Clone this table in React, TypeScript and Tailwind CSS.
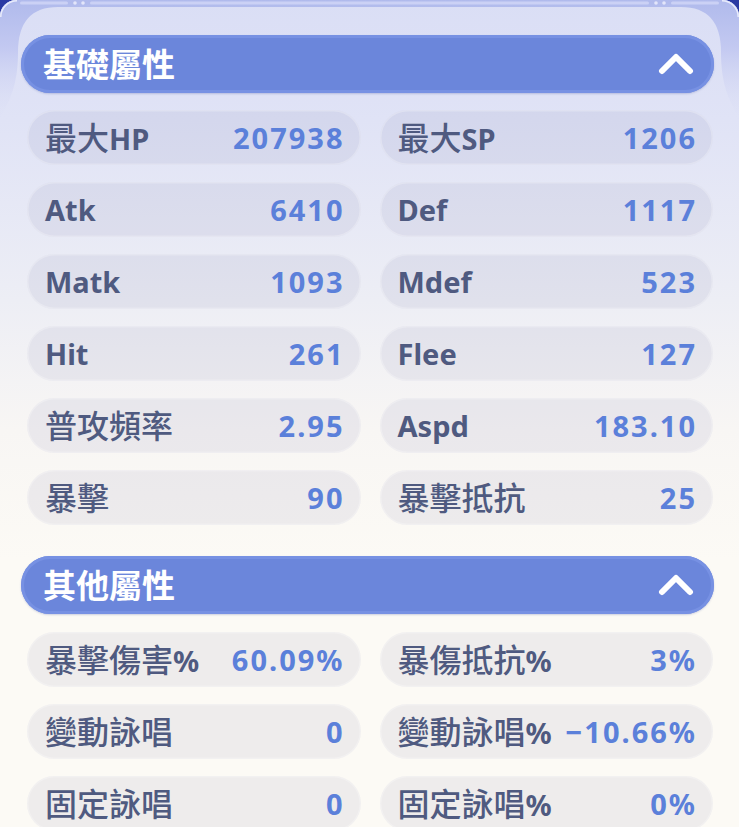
import React from "react";

type Stat = { label: string; value: string };

const basic: Stat[] = [
  { label: "最大HP", value: "207938" },
  { label: "最大SP", value: "1206" },
  { label: "Atk", value: "6410" },
  { label: "Def", value: "1117" },
  { label: "Matk", value: "1093" },
  { label: "Mdef", value: "523" },
  { label: "Hit", value: "261" },
  { label: "Flee", value: "127" },
  { label: "普攻頻率", value: "2.95" },
  { label: "Aspd", value: "183.10" },
  { label: "暴擊", value: "90" },
  { label: "暴擊抵抗", value: "25" },
];

const other: Stat[] = [
  { label: "暴擊傷害%", value: "60.09%" },
  { label: "暴傷抵抗%", value: "3%" },
  { label: "變動詠唱", value: "0" },
  { label: "變動詠唱%", value: "−10.66%" },
  { label: "固定詠唱", value: "0" },
  { label: "固定詠唱%", value: "0%" },
];

function splitRuns(text: string) {
  const runs: { cjk: boolean; t: string }[] = [];
  for (const ch of text) {
    const cjk = /[\u3000-\u9fff]/.test(ch);
    const last = runs[runs.length - 1];
    if (last && last.cjk === cjk) last.t += ch;
    else runs.push({ cjk, t: ch });
  }
  return runs;
}

function Header({ title }: { title: string }) {
  return (
    <div className="flex h-[58px] items-center justify-between rounded-full bg-[#6b86db] pl-[22px] pr-[20px] shadow-[inset_0_0_0_3px_#7791e3,0_1px_2px_rgba(60,80,160,0.25)]">
      <span className="text-[33px] font-bold leading-none text-white">{title}</span>
      <svg width="36" height="22" viewBox="0 0 36 22">
        <path
          d="M4 18 L18 4 L32 18"
          stroke="white"
          strokeWidth="6"
          strokeLinecap="round"
          strokeLinejoin="round"
          fill="none"
        />
      </svg>
    </div>
  );
}

function Cell({ s }: { s: Stat }) {
  return (
    <div className="flex h-[55px] items-center justify-between rounded-full bg-[rgba(95,105,150,0.09)] pl-[18px] pr-[16px] shadow-[inset_0_0_0_1.5px_rgba(255,255,255,0.25)]">
      <span className="flex items-baseline whitespace-nowrap leading-none text-[#4f5a80]">
        {splitRuns(s.label).map((r, i) =>
          r.cjk ? (
            <span key={i} className="text-[32px] font-medium">
              {r.t}
            </span>
          ) : (
            <span key={i} className="text-[29px] font-bold">
              {r.t}
            </span>
          )
        )}
      </span>
      <span className="whitespace-nowrap text-[29px] font-bold leading-none tracking-[2px] text-[#5b80da]">
        {s.value}
      </span>
    </div>
  );
}

export default function App() {
  return (
    <div className="relative h-[827px] w-full overflow-hidden bg-[linear-gradient(180deg,#dadef5_0px,#e0e3f6_120px,#edeef5_300px,#f8f6f4_430px,#fcfaf5_560px)] font-['Noto_Sans','Noto_Sans_CJK_TC',sans-serif]">
      <svg
        className="pointer-events-none absolute left-0 top-0"
        width="739"
        height="120"
        viewBox="0 0 739 120"
      >
        <defs>
          <linearGradient id="band" x1="0" y1="0" x2="0" y2="1">
            <stop offset="0" stopColor="#b0baec" />
            <stop offset="0.4" stopColor="#c3c9f1" />
            <stop offset="1" stopColor="#dcdff5" stopOpacity="0" />
          </linearGradient>
        </defs>
        <path d="M0 0 H16 A16 16 0 0 0 0 16 Z" fill="#2b3aa3" />
        <path d="M739 0 H723 A16 16 0 0 1 739 16 Z" fill="#2b3aa3" />
        <path
          fillRule="evenodd"
          fill="url(#band)"
          d="M0 16 A16 16 0 0 1 16 0 H723 A16 16 0 0 1 739 16 V120 H0 Z M0 118 C10 100 18 85 18 52 Q18 7 58 7 H681 Q721 7 721 52 C721 85 729 100 739 118 Z"
        />
        <path d="M0.8 17 A16.2 16.2 0 0 1 17 0.8" stroke="#e8ebfb" strokeWidth="1.5" fill="none" />
        <path d="M722 0.8 A16.2 16.2 0 0 1 738.2 17" stroke="#e8ebfb" strokeWidth="1.5" fill="none" />
        <rect x="20" y="1.5" width="48" height="3" rx="1.5" fill="#cbd1f5" />
        <circle cx="75" cy="3" r="1.8" fill="#e3e6fa" />
        <circle cx="83" cy="3" r="1.8" fill="#e3e6fa" />
        <rect x="90" y="1.5" width="559" height="3" rx="1.5" fill="#cbd1f5" />
        <circle cx="656" cy="3" r="1.8" fill="#e3e6fa" />
        <circle cx="664" cy="3" r="1.8" fill="#e3e6fa" />
        <rect x="671" y="1.5" width="48" height="3" rx="1.5" fill="#cbd1f5" />
      </svg>

      <div className="relative flex flex-col pl-[21px] pr-[25px] pt-[35px]">
        <Header title="基礎屬性" />
        <div className="mt-[17px] grid grid-cols-2 gap-x-[19px] gap-y-[17px] pl-[6px] pr-[1px]">
          {basic.map((s) => (
            <Cell key={s.label} s={s} />
          ))}
        </div>
        <div className="mt-[31px]">
          <Header title="其他屬性" />
        </div>
        <div className="mt-[18px] grid grid-cols-2 gap-x-[19px] gap-y-[17px] pl-[6px] pr-[1px]">
          {other.map((s) => (
            <Cell key={s.label} s={s} />
          ))}
        </div>
      </div>
    </div>
  );
}
